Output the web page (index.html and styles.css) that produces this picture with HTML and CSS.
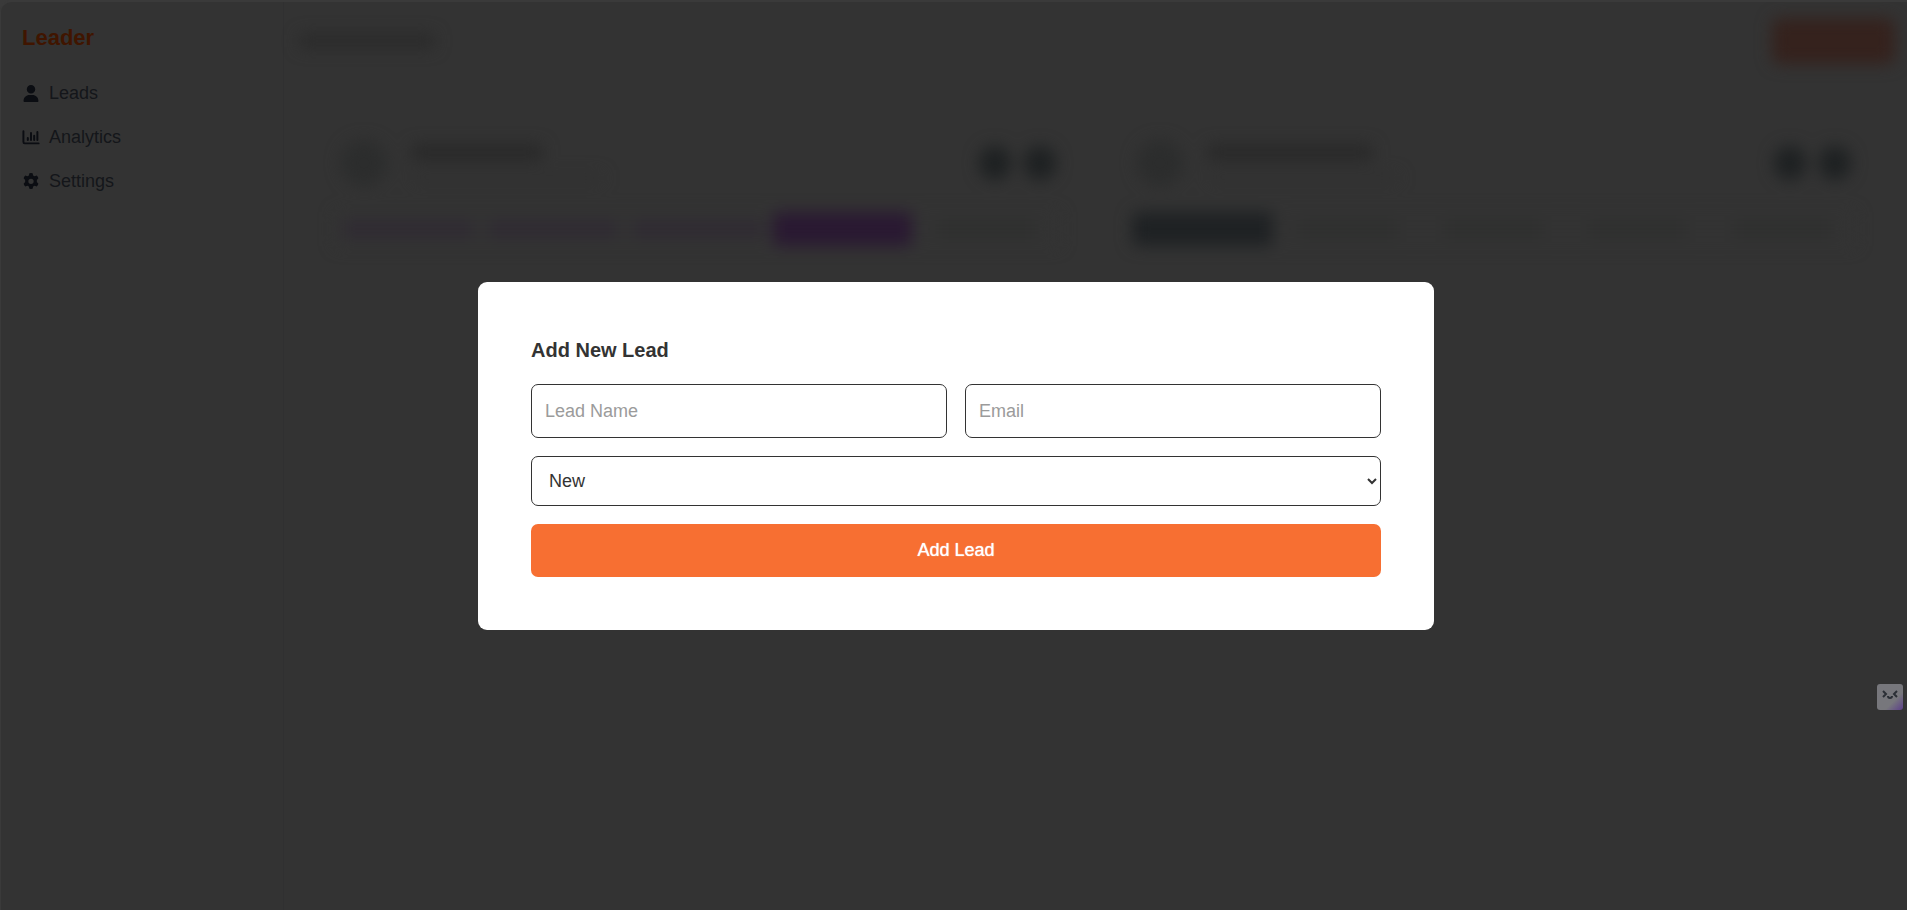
FILE: index.html
```html
<!DOCTYPE html>
<html lang="en">
<head>
<meta charset="utf-8">
<title>Leader</title>
<link rel="stylesheet" href="styles.css">
</head>
<body>
<div class="app">
  <aside class="sidebar">
    <h1 class="brand">Leader</h1>
    <nav class="menu">
      <a href="#leads" class="menu-link"><svg class="icon" viewBox="0 0 448 512"><path d="M224 256a128 128 0 1 0 0-256 128 128 0 1 0 0 256zm-46 48C80 304 0 384 0 482c0 17 13 30 30 30h388c17 0 30-13 30-30 0-98-80-178-178-178z"/></svg>Leads</a>
      <a href="#analytics" class="menu-link"><svg class="icon" viewBox="0 0 512 512"><path d="M28 64v330q0 40 40 40h418" fill="none" stroke="currentColor" stroke-width="58" stroke-linecap="round"/><path d="M160 270v60M256 120v210M352 205v125M448 90v240" fill="none" stroke="currentColor" stroke-width="60" stroke-linecap="round"/></svg>Analytics</a>
      <a href="#settings" class="menu-link"><svg class="icon" viewBox="0 0 512 512"><path fill-rule="evenodd" d="M208 6q48-10 96 0l16 66 42 24 68-20q34 36 48 84l-46 48v64l46 48q-14 48-48 84l-68-20-42 24-16 66q-48 10-96 0l-16-66-42-24-68 20q-34-36-48-84l46-48v-64l-46-48q14-48 48-84l68 20 42-24zM256 170a80 80 0 1 0 0 160 80 80 0 1 0 0-160z"/></svg>Settings</a>
    </nav>
  </aside>
  <main class="content" aria-hidden="true">
    <header class="topbar"><span class="page-title"></span><span class="top-action"></span></header>
    <div class="cards">
      <section class="card">
        <div class="card-head">
          <span class="avatar"></span>
          <span class="person"><span class="name"></span><span class="mail"></span></span>
          <span class="dot"></span><span class="dot"></span>
        </div>
        <div class="stages">
          <span class="stage past"></span><span class="stage past"></span><span class="stage past"></span><span class="stage current"></span><span class="stage"></span>
        </div>
      </section>
      <section class="card">
        <div class="card-head">
          <span class="avatar"></span>
          <span class="person"><span class="name wide"></span><span class="mail"></span></span>
          <span class="dot"></span><span class="dot"></span>
        </div>
        <div class="stages">
          <span class="stage fresh"></span><span class="stage"></span><span class="stage"></span><span class="stage"></span><span class="stage"></span>
        </div>
      </section>
    </div>
  </main>
</div>
<div class="overlay">
  <form class="modal" role="dialog" aria-labelledby="modal-title">
    <h2 class="modal-title" id="modal-title">Add New Lead</h2>
    <div class="row">
      <input class="field" type="text" placeholder="Lead Name" aria-label="Lead Name">
      <input class="field" type="email" placeholder="Email" aria-label="Email">
    </div>
    <select class="field select" aria-label="Status"><option>New</option></select>
    <button class="submit" type="button">Add Lead</button>
  </form>
</div>
<button class="assistant" type="button" aria-label="Assistant">
  <svg viewBox="0 0 26 26" fill="none" stroke="#2b2f36" stroke-width="2"><path d="M6 7l3 3-3 3M20 7l-3 3 3 3M11 12q0 2 2 2t2-2"/></svg>
</button>
</body>
</html>
```
FILE: styles.css
```css
* { box-sizing: border-box; }
body {
  margin: 0;
  background: #3a3a3a;
  font-family: "Liberation Sans", Arial, sans-serif;
  font-size: 18px;
  color: #333;
}
.app {
  display: flex;
  min-height: 100vh;
  overflow: hidden;
  border: solid #3a3a3a;
  border-width: 2px 0 0 1px;
  background: #333;
  border-radius: 12px 0 0 0;
}
.sidebar {
  flex: 0 0 283px;
  padding: 21px;
  border-right: 1px solid #303031;
}
.brand {
  margin: 0 0 29px;
  font-size: 22px;
  line-height: 29px;
  color: #401500;
}
.menu { display: flex; flex-direction: column; gap: 20px; }
.menu-link {
  display: flex;
  align-items: center;
  gap: 9px;
  line-height: 24px;
  color: #14161a;
  text-decoration: none;
}
.icon { width: 18px; height: 17px; fill: #0b0d12; color: #0b0d12; }
.content { flex: 1; min-width: 0; filter: blur(8px); }
.topbar {
  display: flex;
  align-items: center;
  justify-content: space-between;
  padding: 16px 12px 0 16px;
}
.page-title { width: 134px; height: 14px; background: #2a2a2a; }
.top-action { width: 123px; height: 46px; border-radius: 8px; background: #35221d; }
.cards {
  display: grid;
  grid-template-columns: 1fr 1fr;
  padding: 64px 16px 0;
}
.card { padding: 12px 36px 29px; }
.card-head { display: flex; align-items: center; gap: 13px; }
.avatar { width: 46px; height: 46px; margin-left: 5px; border-radius: 50%; background: #2c2d2d; }
.person { flex: 1; display: flex; flex-direction: column; gap: 14px; margin-left: 12px; }
.name { width: 130px; height: 15px; background: #282828; }
.wide { width: 164px; }
.mail { width: 190px; height: 8px; background: #313131; }
.dot { width: 32px; height: 34px; border-radius: 50%; background: #1e2122; }
.dot:last-child { margin-right: 4px; }
.stages { display: grid; grid-template-columns: repeat(5, 1fr); margin-top: 26px; }
.stage { height: 34px; border: solid #333; border-width: 10px 24px; background: #2e2f2e; }
.past { border-width: 10px 8px; background: #2f2933; }
.current { border-width: 0 3px; border-radius: 6px; background: #2a1932; }
.fresh { border-width: 0 3px 0 0; border-radius: 6px; background: #1f2224; }
.overlay {
  position: fixed;
  inset: 0;
  display: flex;
  align-items: center;
  justify-content: center;
  padding: 2px 0 0 5px;
}
.modal {
  display: flex;
  flex-direction: column;
  gap: 18px;
  width: 956px;
  max-width: 100%;
  padding: 53px;
  border-radius: 9px;
  background: #fff;
}
.modal-title { margin: 0; padding: 1px 0 2px; font-size: 20px; line-height: 28px; }
.row { display: grid; grid-template-columns: 1fr 1fr; gap: 18px; }
.field {
  width: 100%;
  height: 54px;
  padding: 0 13px;
  border: 1px solid #333;
  border-radius: 7px;
  background: #fff;
  font: inherit;
  color: #333;
}
.field::placeholder { color: #9b9b9b; }
.select { height: 50px; }
.submit {
  height: 53px;
  border: 0;
  border-radius: 7px;
  background: #f76f32;
  font: inherit;
  text-shadow: 0 0 1px #fff;
  color: #fff;
}
.assistant {
  position: fixed;
  right: 4px;
  bottom: 200px;
  width: 26px;
  height: 26px;
  padding: 0;
  border: 0;
  border-radius: 3px;
  background: linear-gradient(135deg, #77777c 65%, #5c3f8a);
}
.assistant svg { display: block; }
```
